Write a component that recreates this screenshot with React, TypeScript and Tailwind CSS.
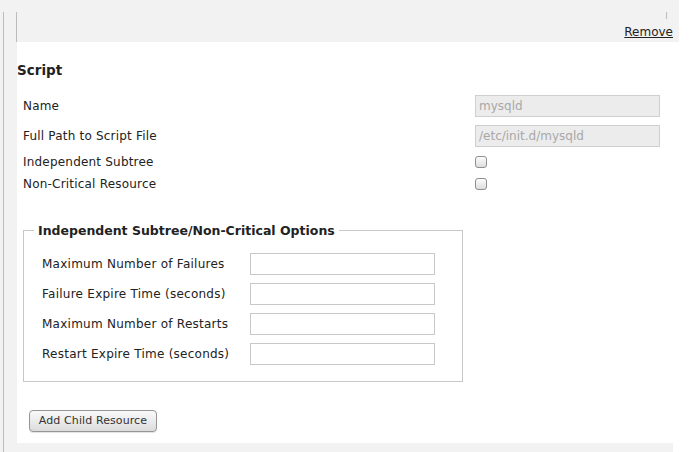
import React from "react";

const font = { fontFamily: '"DejaVu Sans", "Liberation Sans", sans-serif' };

function Row({ label, children }: { label: string; children: React.ReactNode }) {
  return (
    <div className="flex items-center h-[22px]">
      <div className="w-[452px] text-[12px] tracking-[0.2px] text-[#222]">{label}</div>
      {children}
    </div>
  );
}

function Check() {
  return (
    <span className="block w-[12px] h-[12px] rounded-[3px] border border-[#8f8f8f] bg-gradient-to-b from-[#fcfcfc] to-[#dedede]" />
  );
}

function FRow({ label }: { label: string }) {
  return (
    <div className="flex items-center h-[22px]">
      <div className="w-[208px] text-[12px] tracking-[0.25px] text-[#222]">{label}</div>
      <div className="w-[185px] h-[22px] border border-[#c9c9c9] bg-white" />
    </div>
  );
}

export default function App() {
  return (
    <div className="flex w-[694px] h-[452px] bg-white overflow-hidden" style={font}>
      <div className="w-[17px] h-full bg-[#f2f2f2] flex pt-[12px]">
        <div className="ml-[3px] w-px h-full bg-[#bcbcbc]" />
        <div className="ml-[12px] w-px h-[30px] bg-[#bcbcbc]" />
      </div>
      <div className="w-[662px] flex flex-col">
        <div className="h-[42px] bg-[#f2f2f2] flex flex-col items-end pt-[12px] pr-[6px]">
          <div className="w-px h-[7px] bg-[#bcbcbc] mr-[6px]" />
          <a className="text-[12px] leading-[14px] mt-[6px] text-[#222] underline">Remove</a>
        </div>
        <div className="h-[401px] bg-white flex flex-col">
          <div className="mt-[20px] text-[13.5px] leading-[16px] font-bold text-[#222]">Script</div>
          <div className="ml-[6px] mt-[17px] flex flex-col">
            <Row label="Name">
              <div className="w-[185px] h-[22px] border border-[#cfcfcf] bg-[#ececec] text-[12px] text-[#a8a8a8] pl-[3px] flex items-center">mysqld</div>
            </Row>
            <div className="h-[8px]" />
            <Row label="Full Path to Script File">
              <div className="w-[185px] h-[22px] border border-[#cfcfcf] bg-[#ececec] text-[12px] text-[#a8a8a8] pl-[3px] flex items-center">/etc/init.d/mysqld</div>
            </Row>
            <div className="h-[4px]" />
            <Row label="Independent Subtree">
              <Check />
            </Row>
            <Row label="Non-Critical Resource">
              <Check />
            </Row>
          </div>
          <fieldset className="ml-[6px] mt-[28px] w-[440px] border border-[#c8c8c8] pl-[10px] pb-[16px]">
            <legend className="px-[4px] text-[12.5px] leading-[15px] font-bold text-[#222]">
              Independent Subtree/Non-Critical Options
            </legend>
            <div className="pl-[8px] pt-[15px] flex flex-col gap-[8px]">
              <FRow label="Maximum Number of Failures" />
              <FRow label="Failure Expire Time (seconds)" />
              <FRow label="Maximum Number of Restarts" />
              <FRow label="Restart Expire Time (seconds)" />
            </div>
          </fieldset>
          <button className="ml-[12px] mt-[28px] w-[128px] h-[22px] rounded-[4px] border border-[#959595] bg-gradient-to-b from-[#fafafa] to-[#dcdcdc] text-[11px] tracking-[0.1px] text-[#333] shadow-[0_1px_1px_rgba(0,0,0,0.12)]">
            Add Child Resource
          </button>
        </div>
        <div className="h-[9px] w-[656px] bg-[#f2f2f2]" />
      </div>
    </div>
  );
}
